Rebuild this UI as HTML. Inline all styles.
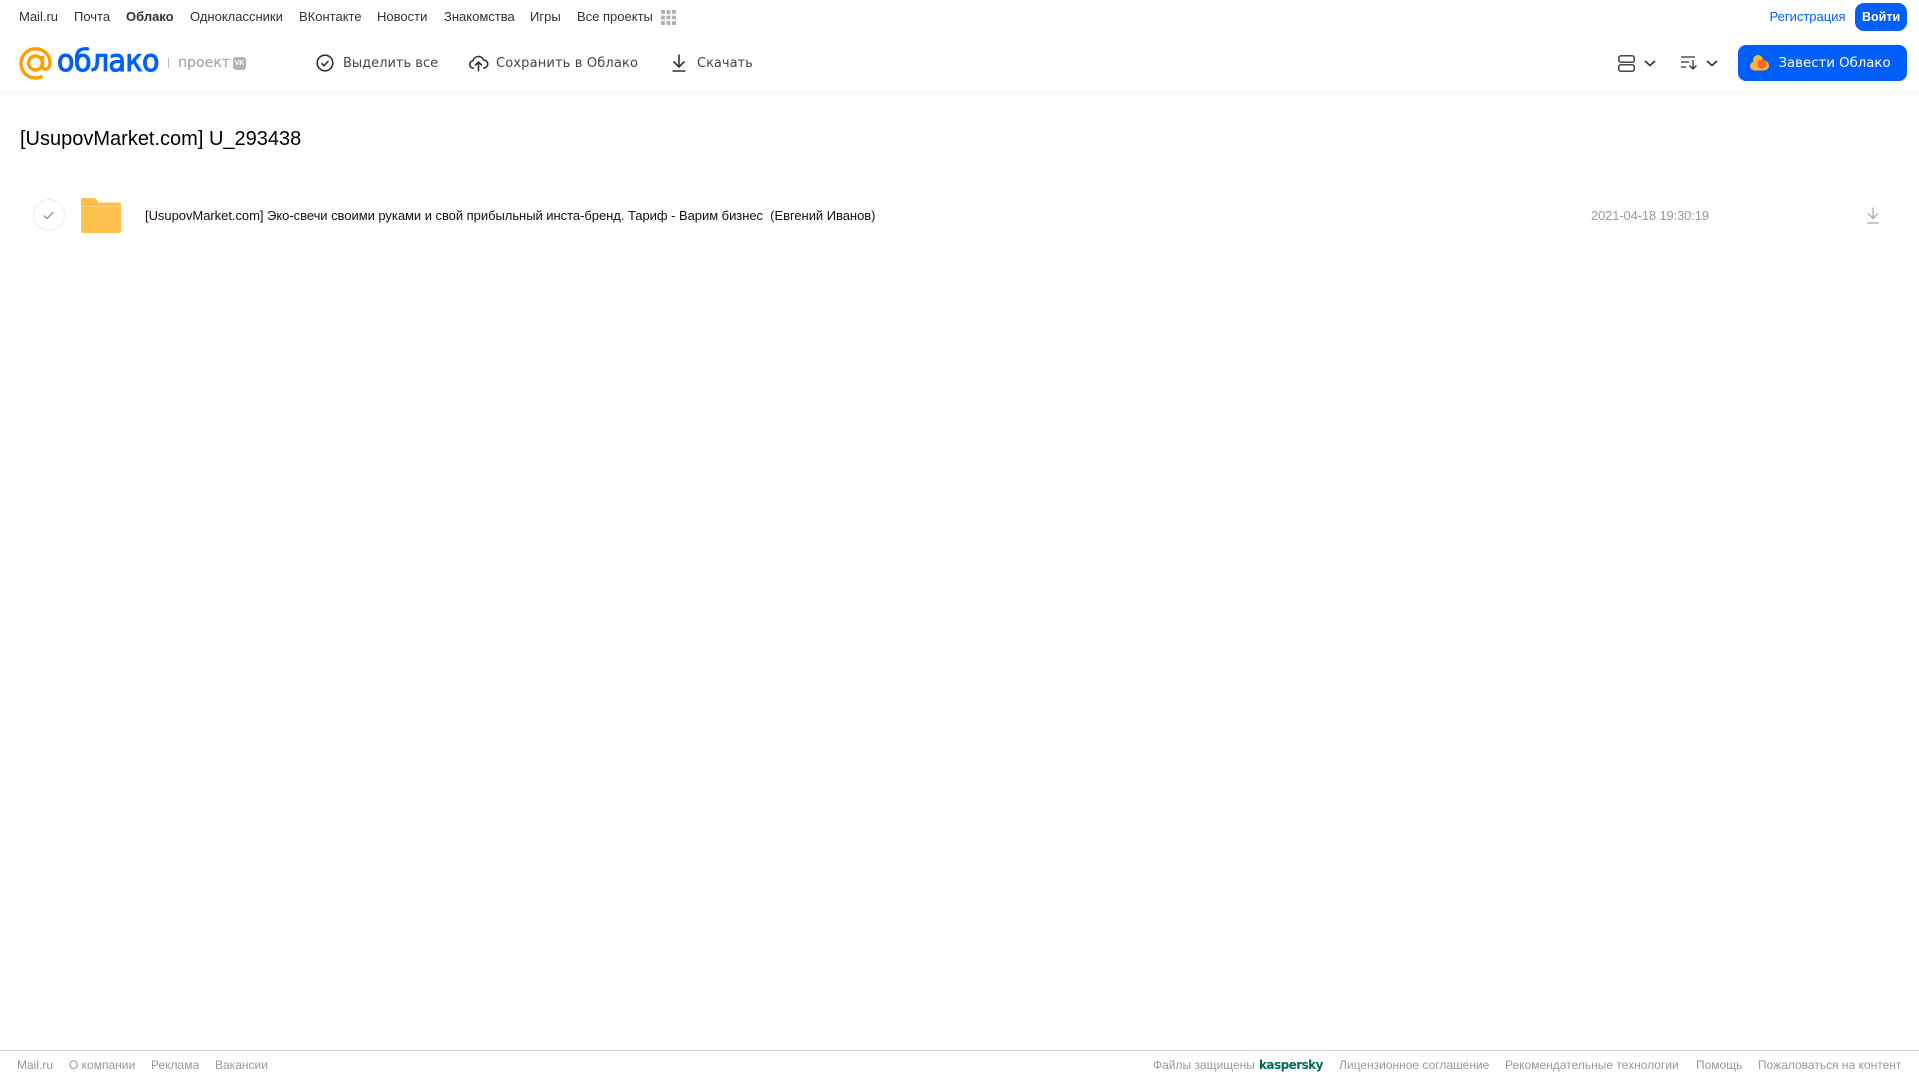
<!DOCTYPE html>
<html lang="ru"><head><meta charset="utf-8"><title>Облако</title>
<style>
html,body{margin:0;padding:0;background:#fff;width:1919px;height:1079px;overflow:hidden}
body{position:relative;font-family:"Liberation Sans","Noto Sans CJK SC",sans-serif;color:#333}
.t{position:absolute;white-space:nowrap;line-height:16px}
.n{font-size:13px;top:9px;color:#333}
.a{top:56px;color:#444;font-family:"DejaVu Sans","Liberation Sans",sans-serif;font-size:13px}
.f{font-size:12px;top:1057px;color:#999}
svg{position:absolute;overflow:visible}
</style></head><body>
<div style="position:absolute;left:0;top:0;width:1919px;height:91px;background:#fff;box-shadow:0 1px 6px rgba(0,0,0,.07)"></div>

<span class="t n" style="left:19px">Mail.ru</span>
<span class="t n" style="left:74px">Почта</span>
<span class="t n" style="left:126px;font-weight:bold">Облако</span>
<span class="t n" style="left:190px">Одноклассники</span>
<span class="t n" style="left:299px">ВКонтакте</span>
<span class="t n" style="left:377px">Новости</span>
<span class="t n" style="left:444px">Знакомства</span>
<span class="t n" style="left:530px">Игры</span>
<span class="t n" style="left:577px">Все проекты</span>
<svg style="left:661px;top:10px" width="15" height="15" fill="#b0b0b0"><rect width="4" height="4" rx="1"/><rect x="5.5" width="4" height="4" rx="1"/><rect x="11" width="4" height="4" rx="1"/><rect y="5.5" width="4" height="4" rx="1"/><rect x="5.5" y="5.5" width="4" height="4" rx="1"/><rect x="11" y="5.5" width="4" height="4" rx="1"/><rect y="11" width="4" height="4" rx="1"/><rect x="5.5" y="11" width="4" height="4" rx="1"/><rect x="11" y="11" width="4" height="4" rx="1"/></svg>

<span class="t n" style="left:1769.500px;color:#005ff9">Регистрация</span>
<div style="position:absolute;left:1855px;top:3px;width:52px;height:28px;border-radius:9px;background:#005ff9"></div>
<span class="t n" style="left:1862px;color:#fff;font-weight:bold;font-size:12.5px">Войти</span>

<!-- logo -->
<svg style="left:19px;top:47px" width="33" height="33" viewBox="0 0 33 33" fill="none" stroke="#ff9e00" stroke-width="3.4"><circle cx="16.5" cy="16" r="7"/><path d="M23.5 9v9.500c0 5.500 7.500 5 7.500-2.500C31 7.500 24.500 1.800 16.500 1.800A14.500 14.500 0 0 0 2 16.300c0 8.500 6.500 14.700 14.500 14.700 2.800 0 5-.6 7-1.800"/></svg>
<span class="t" style="left:57px;top:44px;font-family:'DejaVu Sans',sans-serif;font-size:30px;line-height:36px;color:#005ff9;-webkit-text-stroke:1.100px #005ff9;letter-spacing:-.6px;transform:scaleX(.95);transform-origin:0 50%">облако</span>
<div style="position:absolute;left:168px;top:58px;width:1px;height:10px;background:#bbb"></div>
<span class="t" style="left:178px;top:55px;font-family:'DejaVu Sans',sans-serif;font-size:14px;color:#a9a9a9;-webkit-text-stroke:.25px #a9a9a9">проект</span>
<div style="position:absolute;left:233px;top:57px;width:13px;height:13px;border-radius:3px;background:#b3b3b3;color:#fff;font:bold 7px/13px 'Liberation Sans',sans-serif;text-align:center">VK</div>

<!-- toolbar -->
<svg style="left:316px;top:54px" width="18" height="18" viewBox="0 0 18 18" fill="none" stroke="#333" stroke-width="1.600"><circle cx="9" cy="9" r="7.800"/><path d="M5.500 9.200l2.500 2.500 4.500-4.700"/></svg>
<span class="t a" style="left:343px">Выделить все</span>
<svg style="left:469px;top:54px" width="19" height="18" viewBox="0 0 19 18" fill="none" stroke="#333" stroke-width="1.600"><path d="M5 14H4.500A3.600 3.600 0 0 1 4 6.800 5.500 5.500 0 0 1 14.500 6a4 4 0 0 1 .5 8h-1"/><path d="M9.500 17.500V8.500M6 11.500l3.500-3.500 3.500 3.500"/></svg>
<span class="t a" style="left:496px;letter-spacing:.15px">Сохранить в Облако</span>
<svg style="left:671px;top:54px" width="16" height="18" viewBox="0 0 16 18" fill="none" stroke="#333" stroke-width="1.600"><path d="M8 0.500V12.500M2.500 7.500L8 13l5.500-5.500M1.500 17h13"/></svg>
<span class="t a" style="left:697px">Скачать</span>

<!-- right tools -->
<svg style="left:1617.500px;top:55px" width="17" height="17" viewBox="0 0 17 17" fill="none" stroke="#333" stroke-width="1.400"><rect x=".8" y=".8" width="15.400" height="6.400" rx="2"/><rect x=".8" y="9.800" width="15.400" height="6.400" rx="2"/></svg>
<svg style="left:1644px;top:60px" width="12" height="7" fill="none" stroke="#333" stroke-width="1.700"><path d="M1 1l5 4.500L11 1"/></svg>
<svg style="left:1681px;top:56px" width="17" height="14" viewBox="0 0 17 14" fill="none" stroke="#333" stroke-width="1.300"><path d="M0 1h14M0 6h8M0 11h5M12 4v9M8.500 9.500l3.500 3.500 3.500-3.500"/></svg>
<svg style="left:1706px;top:60px" width="12" height="7" fill="none" stroke="#333" stroke-width="1.700"><path d="M1 1l5 4.500L11 1"/></svg>
<div style="position:absolute;left:1738px;top:45px;width:169px;height:36px;border-radius:8px;background:#005ff9"></div>
<svg style="left:1750px;top:55px" width="19" height="16" viewBox="0 0 19 16"><g fill="#ffb13d"><circle cx="8" cy="5" r="5"/><circle cx="4.500" cy="11" r="4.500"/><circle cx="14" cy="10.500" r="5"/><rect x="4" y="8" width="10" height="7.500"/></g><circle cx="12" cy="9" r="4.700" fill="#f26a1f"/></svg>
<span class="t a" style="left:1778.500px;color:#fff;font-size:13.3px">Завести Облако</span>

<!-- title -->
<span class="t" style="left:20px;top:126px;font-size:20px;line-height:26px;color:#000">[UsupovMarket.com] U_293438</span>

<!-- row -->
<div style="position:absolute;left:33px;top:199px;width:30px;height:30px;border:1px solid #ececec;border-radius:50%"></div>
<svg style="left:43px;top:211px" width="12" height="9" fill="none" stroke="#999" stroke-width="1.500"><path d="M1 4.500l3 3L10.500 1"/></svg>
<svg style="left:81px;top:198px" width="40" height="35" viewBox="0 0 40 35"><path d="M2 0h10c2 0 3 .7 4 2l2 2.500h20a2 2 0 0 1 2 2V33a2 2 0 0 1-2 2H2a2 2 0 0 1-2-2V2a2 2 0 0 1 2-2z" fill="#ffc046"/><path d="M0 9h40v24a2 2 0 0 1-2 2H2a2 2 0 0 1-2-2z" fill="#ffc14d"/><path d="M0 8.500h40" stroke="#ffd27a" stroke-width="1"/></svg>
<span class="t" style="left:145px;top:208px;font-size:13px;letter-spacing:-.04px;color:#1a0a1a">[UsupovMarket.com] Эко-свечи своими руками и свой прибыльный инста-бренд. Тариф - Варим бизнес&nbsp; (Евгений Иванов)</span>
<span class="t" style="left:1591px;top:208px;font-size:13px;letter-spacing:-.15px;color:#999">2021-04-18 19:30:19</span>
<svg style="left:1866px;top:207px" width="14" height="17" viewBox="0 0 14 17" fill="none" stroke="#aaa" stroke-width="1.300"><path d="M7 0.500V11.500M2 6.500l5 5 5-5M1 16h12"/></svg>

<!-- footer -->
<div style="position:absolute;left:0;top:1050px;width:1919px;height:1px;background:#d9d9d9"></div>
<span class="t f" style="left:17px">Mail.ru</span>
<span class="t f" style="left:69px">О компании</span>
<span class="t f" style="left:151px">Реклама</span>
<span class="t f" style="left:215px">Вакансии</span>
<span class="t f" style="left:1153px">Файлы защищены</span>
<span class="t f" style="left:1259px;color:#006d5c;font-weight:bold;font-family:'DejaVu Sans',sans-serif;letter-spacing:-.55px">kaspersky</span>
<span class="t f" style="left:1339px">Лицензионное соглашение</span>
<span class="t f" style="left:1505px">Рекомендательные технологии</span>
<span class="t f" style="left:1696px">Помощь</span>
<span class="t f" style="left:1758px">Пожаловаться на контент</span>
</body></html>
